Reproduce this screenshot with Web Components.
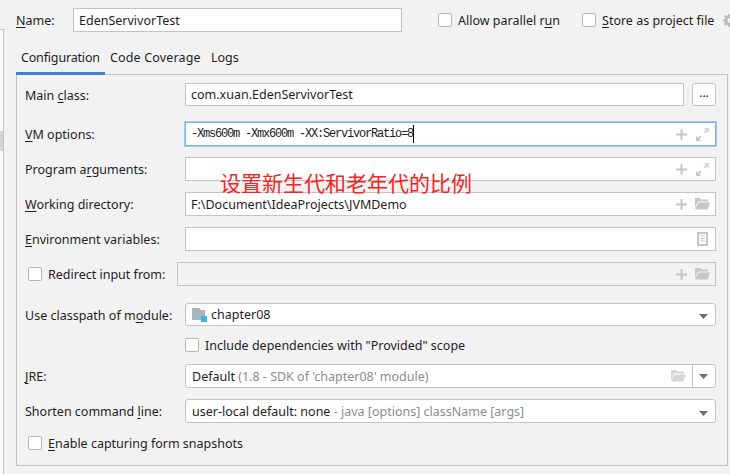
<!DOCTYPE html>
<html>
<head>
<meta charset="utf-8">
<style>
  html, body { margin: 0; padding: 0; background: #f2f2f2; }
  body { width: 730px; height: 474px; overflow: hidden; font: 12.5px "Noto Sans", "Open Sans", sans-serif; color: #1e1e1e; }
</style>
</head>
<body>
<template id="field-tpl">
  <style>
    :host { display: flex; box-sizing: border-box; height: 24px; align-items: center; background: #fff; border: 1px solid #c4c4c4; padding: 0 5px; min-width: 0; color: #1e1e1e; }
    :host([rounded]) { border-radius: 3px; padding-left: 6px; }
    :host([disabled]) { background: #f2f2f2; }
    :host([focused]) { border: 1px solid #7fb1e6; box-shadow: 0 0 0 1px #a5c8ef; }
    .text { flex: 1; min-width: 0; overflow: hidden; display: flex; align-items: center; white-space: pre; }
    .icons { display: flex; align-items: center; gap: 8px; }
  </style>
  <div class="text"><slot></slot></div>
  <div class="icons"><slot name="icons"></slot></div>
</template>

<template id="row-tpl">
  <style>
    :host { display: grid; grid-template-columns: 160px 1fr; align-items: center; }
    .label { white-space: nowrap; padding-top: 1px; }
  </style>
  <div class="label"><slot name="label"></slot></div>
  <slot></slot>
</template>

<template id="check-tpl">
  <style>
    :host { display: flex; align-items: center; gap: 6px; white-space: nowrap; height: 14px; }
    .box { box-sizing: border-box; width: 14px; height: 14px; background: #fff; border: 1px solid #b8b8b8; border-radius: 2px; flex: none; }
  </style>
  <span class="box"></span><span><slot></slot></span>
</template>

<template id="tabs-tpl">
  <style>
    :host { display: flex; position: relative; z-index: 1; height: 31px; margin-top: 12px; margin-bottom: -1px; }
    ::slotted(span) { padding: 0 5px; line-height: 27px; box-sizing: border-box; height: 31px; }
    ::slotted(span.on) { border-bottom: 3px solid #4083c9; width: 89px; letter-spacing: -0.17px; white-space: nowrap; }
    ::slotted(span.wide) { width: 101px; letter-spacing: 0.15px; white-space: nowrap; }
  </style>
  <slot></slot>
</template>

<script>
  function simple(name, tpl) {
    customElements.define(name, class extends HTMLElement {
      connectedCallback() {
        if (this.shadowRoot) return;
        this.attachShadow({ mode: 'open' });
        this.shadowRoot.appendChild(document.getElementById(tpl).content.cloneNode(true));
      }
    });
  }
  simple('idea-field', 'field-tpl');
  simple('idea-row', 'row-tpl');
  simple('idea-check', 'check-tpl');
  simple('idea-tabs', 'tabs-tpl');

  // little grey glyphs used inside the fields
  const GLYPHS = {
    plus: '<svg width="11" height="11" viewBox="0 0 11 11"><path d="M4.5 0h2v4.5H11v2H6.5V11h-2V6.5H0v-2h4.5z" fill="#c4c6c9"/></svg>',
    expand: '<svg width="13" height="13" viewBox="0 0 13 13"><path d="M8 0h5v5l-1.8-1.8-2.4 2.4-1.4-1.4 2.4-2.4z" fill="#d5d7d9"/><path d="M0 13V8l1.8 1.8 2.4-2.4 1.4 1.4-2.4 2.4L5 13z" fill="#c4c6c9"/></svg>',
    folder: '<svg width="15" height="12" viewBox="0 0 15 12"><path d="M0 0h5l1 1.5h7V3.5H3L0 10z" fill="#c4c6c9"/><path d="M3.5 4.5H15l-2.5 7H0z" fill="#c4c6c9"/></svg>',
    doc: '<svg width="11" height="14" viewBox="0 0 11 14"><path d="M0 0h11v14H0zM2 2v10h7V2z" fill="#c4c6c9"/><path d="M3 3.5h5v1H3zM3 6h5v1H3zM3 8.5h5v1H3z" fill="#c4c6c9"/></svg>',
    arrow: '<svg width="9" height="5" viewBox="0 0 9 5"><path d="M0 0h9L4.5 5z" fill="#6e6e6e"/></svg>',
    gear: '<svg width="13" height="13" viewBox="0 0 12 12"><path d="M5 0h2l.3 1.6 1.2.5L9.9 1.2l1.4 1.4-.9 1.4.5 1.2L12 5v2l-1.6.3-.5 1.2.9 1.4-1.4 1.4-1.4-.9-1.2.5L7 12H5l-.3-1.6-1.2-.5-1.4.9L.7 9.4l.9-1.4-.5-1.2L0 7V5l1.6-.3.5-1.2-.9-1.4L2.6.7 4 1.6l1.2-.5zM6 4a2 2 0 100 4 2 2 0 000-4z" fill="#b9bbbe" fill-rule="evenodd"/></svg>',
    module: '<svg width="15" height="14" viewBox="0 0 15 14"><path d="M0 0h7l2 2h4v6H9v4H0z" fill="#a9b4bf"/><rect x="9" y="8" width="6" height="6" fill="#40b6e0"/></svg>'
  };
  customElements.define('idea-icon', class extends HTMLElement {
    connectedCallback() {
      if (this.shadowRoot) return;
      this.attachShadow({ mode: 'open' });
      this.shadowRoot.innerHTML = '<style>:host{display:inline-flex;align-items:center;justify-content:center;flex:none}:host([slotbox]){width:15px}:host([faint]){opacity:.7}</style>' + GLYPHS[this.getAttribute('name')];
    }
  });

  customElements.define('idea-config', class extends HTMLElement {
    connectedCallback() {
      if (this.shadowRoot) return;
      this.attachShadow({ mode: 'open' });
      this.shadowRoot.innerHTML = `
        <style>
          :host { display: block; position: relative; height: 474px; overflow: hidden; }
          .side { position: absolute; left: 0; top: 29px; bottom: 0; width: 3px; background: #fbfbfb; border-right: 1px solid #c4c4c4; border-top: 1px solid #c4c4c4; }
          .side i { position: absolute; left: 0; top: 101px; width: 3px; height: 20px; background: #d4d4d4; }
          .main { padding: 8px 0 0 16px; width: 712px; }
          .name { display: flex; align-items: center; height: 24px; width: 730px; }
          .name .lbl { width: 57px; flex: none; }
          .name idea-field { width: 329px; flex: none; }
          .name .c1 { margin-left: 36px; width: 144px; flex: none; }
          .name .c2 { width: 141px; flex: none; }
          .panel { box-sizing: border-box; height: 392px; border: 1px solid #c4c4c4; padding: 8px 11px 0 8px; display: flex; flex-direction: column; }
          .panel > idea-row { margin-top: 11px; }
          .panel > idea-row:first-child { margin-top: 0; }
          u { text-underline-offset: 2px; }
          .dim { color: #8c8c8c; }
          .mono { font: 12px "Liberation Mono", monospace; letter-spacing: -1.2px; }
          .note { position: absolute; left: 220px; top: 169px; color: #f02626; font: 21px "Noto Sans CJK SC", sans-serif; line-height: 26px; white-space: nowrap; }
          .more { box-sizing: border-box; width: 24px; height: 23px; background: #fff; border: 1px solid #c4c4c4; border-radius: 3px; margin-left: 8px; text-align: center; line-height: 18px; font-size: 12px; flex: none; }
          .line { display: flex; }
          .line idea-field { flex: 1; height: 23px; }
          .caret { width: 1px; height: 18px; background: #000; flex: none; }
          .icons { display: flex; align-items: center; gap: 8px; }
          .split { width: 1px; height: 22px; background: #c4c4c4; margin: 0 6px; flex: none; }
          .combo { display: flex; align-items: center; }
          .mod { display: flex; align-items: center; gap: 4px; }
          .arrow { margin-right: 2px; }
          .redirect { display: flex; align-items: center; margin-top: 11px; }
          .redirect idea-check { width: 149px; margin-left: 3px; flex: none; }
          .redirect idea-field { flex: 1; }
        </style>
        <div class="side"><i></i></div>
        <div class="main">
          <div class="name">
            <span class="lbl"><u>N</u>ame:</span>
            <idea-field>EdenServivorTest</idea-field>
            <idea-check class="c1">Allow parallel r<u>u</u>n</idea-check>
            <idea-check class="c2"><u>S</u>tore as project file</idea-check>
            <idea-icon name="gear"></idea-icon>
          </div>
          <idea-tabs><span class="on">Configuration</span><span class="wide">Code Coverage</span><span>Logs</span></idea-tabs>
          <div class="panel">
            <idea-row>
              <span slot="label">Main <u>c</u>lass:</span>
              <div class="line"><idea-field>com.xuan.EdenServivorTest</idea-field><div class="more">...</div></div>
            </idea-row>
            <idea-row style="margin-top:16px">
              <span slot="label"><u>V</u>M options:</span>
              <idea-field focused><span class="mono">-Xms600m -Xmx600m -XX:ServivorRatio=8</span><span class="caret"></span><span slot="icons" class="icons"><idea-icon name="plus"></idea-icon><idea-icon slotbox name="expand"></idea-icon></span></idea-field>
            </idea-row>
            <idea-row>
              <span slot="label">Program a<u>r</u>guments:</span>
              <idea-field><span slot="icons" class="icons"><idea-icon name="plus"></idea-icon><idea-icon slotbox name="expand"></idea-icon></span></idea-field>
            </idea-row>
            <idea-row>
              <span slot="label"><u>W</u>orking directory:</span>
              <idea-field>F:\\Document\\IdeaProjects\\JVMDemo<span slot="icons" class="icons"><idea-icon name="plus"></idea-icon><idea-icon slotbox name="folder"></idea-icon></span></idea-field>
            </idea-row>
            <idea-row>
              <span slot="label"><u>E</u>nvironment variables:</span>
              <idea-field><span slot="icons" class="icons"><idea-icon slotbox name="doc"></idea-icon></span></idea-field>
            </idea-row>
            <div class="redirect">
              <idea-check>Redirect input from:</idea-check>
              <idea-field disabled><span slot="icons" class="icons"><idea-icon name="plus"></idea-icon><idea-icon slotbox name="folder"></idea-icon></span></idea-field>
            </div>
            <idea-row style="margin-top:17px">
              <span slot="label">Use classpath of m<u>o</u>dule:</span>
              <idea-field rounded style="height:23px"><span class="mod"><idea-icon name="module"></idea-icon>chapter08</span><span slot="icons" class="arrow"><idea-icon name="arrow"></idea-icon></span></idea-field>
            </idea-row>
            <idea-check style="margin:12px 0 0 160px">Include dependencies with "Provided" scope</idea-check>
            <idea-row style="margin-top:12px">
              <span slot="label"><u>J</u>RE:</span>
              <idea-field rounded>Default <span class="dim">(1.8 - SDK of 'chapter08' module)</span><span slot="icons" class="combo"><idea-icon faint name="folder"></idea-icon><span class="split"></span><idea-icon class="arrow" name="arrow"></idea-icon></span></idea-field>
            </idea-row>
            <idea-row>
              <span slot="label">Shorten command <u>l</u>ine:</span>
              <idea-field rounded>user-local default: none <span class="dim">- java [options] className [args]</span><span slot="icons" class="arrow"><idea-icon name="arrow"></idea-icon></span></idea-field>
            </idea-row>
            <idea-check style="margin:13px 0 0 3px"><u>E</u>nable capturing form snapshots</idea-check>
          </div>
        </div>
        <div class="note">设置新生代和老年代的比例</div>`;
    }
  });
</script>
<idea-config></idea-config>
</body>
</html>
